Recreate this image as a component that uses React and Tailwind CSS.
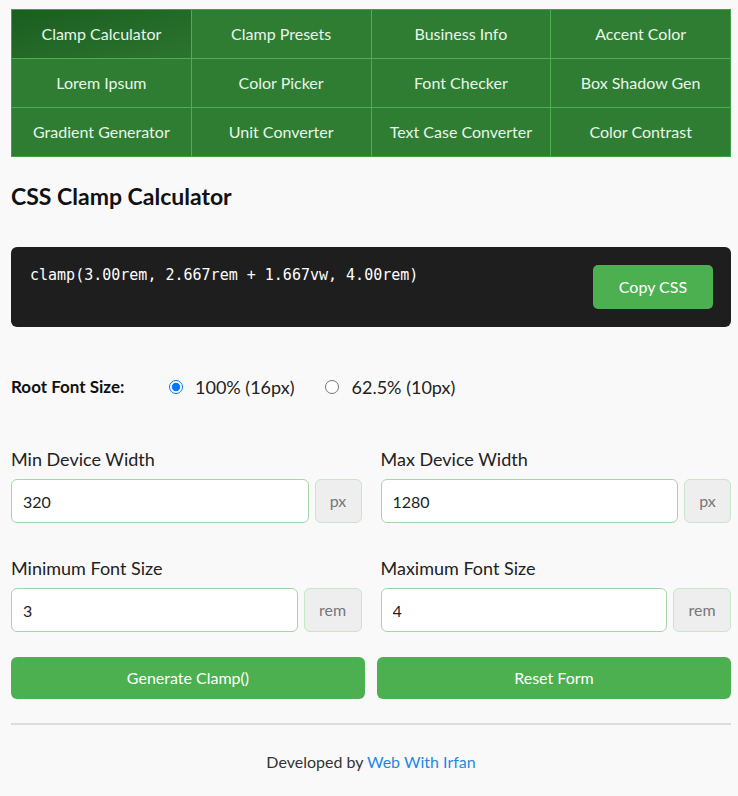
import { useState } from 'react';

const tools = [
  'Clamp Calculator', 'Clamp Presets', 'Business Info', 'Accent Color',
  'Lorem Ipsum', 'Color Picker', 'Font Checker', 'Box Shadow Gen',
  'Gradient Generator', 'Unit Converter', 'Text Case Converter', 'Color Contrast',
];

function Field({ label, value, unit, unitWidth }) {
  return (
    <div>
      <label className="block text-[18px] leading-[24px] text-[#222] mb-[8px]">{label}</label>
      <div className="flex gap-[6px]">
        <input
          type="text"
          defaultValue={value}
          className="flex-1 min-w-0 h-[44px] px-[11px] text-[16px] text-[#222] bg-white border border-[#a5d6a7] rounded-[6px] outline-none"
        />
        <span className={`${unitWidth} h-[44px] flex items-center justify-center text-[16px] text-[#777] bg-[#eeeeee] border border-[#c8e6c9] rounded-[6px]`}>
          {unit}
        </span>
      </div>
    </div>
  );
}

export default function App() {
  const [root, setRoot] = useState('100');

  return (
    <div className="min-h-[796px] bg-[#f9f9f9] pt-[9px] pl-[11px] pr-[7px]" style={{ fontFamily: 'Lato, "Noto Sans", sans-serif' }}>
      {/* ── Tool nav ── */}
      <nav className="grid grid-cols-4 gap-px bg-[#4caf50] border border-[#43a047]">
        {tools.map((t, i) => (
          <button
            key={t}
            className={`h-[48px] flex items-center justify-center text-[16px] text-[#e8f5e9] ${
              i === 0 ? 'bg-linear-to-br from-[#1b5e20] to-[#2b742f]' : 'bg-[#2e7d32]'
            }`}
          >
            {t}
          </button>
        ))}
      </nav>

      <h1 className="mt-[24px] text-[23px] leading-[30px] font-bold text-[#111]">CSS Clamp Calculator</h1>

      {/* ── Output ── */}
      <div className="mt-[36px] h-[80px] bg-[#1e1e1e] rounded-[6px] flex justify-between pl-[19px] pr-[18px] pt-[18px]">
        <code className="text-[15px] leading-[20px] text-white" style={{ fontFamily: '"DejaVu Sans Mono", "Liberation Mono", monospace' }}>
          clamp(3.00rem, 2.667rem + 1.667vw, 4.00rem)
        </code>
        <button className="w-[120px] h-[44px] bg-[#4caf50] text-white text-[16px] rounded-[5px]">Copy CSS</button>
      </div>

      {/* ── Root font size ── */}
      <div className="mt-[48px] flex items-center h-[24px]">
        <span className="text-[17px] font-bold text-[#111] w-[158px]">Root Font Size:</span>
        <label className="flex items-center gap-[12px] text-[18px] text-[#222] mr-[30px]">
          <input type="radio" name="root" checked={root === '100'} onChange={() => setRoot('100')} className="w-[14px] h-[14px] m-0" />
          100% (16px)
        </label>
        <label className="flex items-center gap-[13px] text-[18px] text-[#222]">
          <input type="radio" name="root" checked={root === '62'} onChange={() => setRoot('62')} className="w-[14px] h-[14px] m-0" />
          62.5% (10px)
        </label>
      </div>

      {/* ── Inputs ── */}
      <div className="mt-[48px] grid grid-cols-2 gap-x-[19px] gap-y-[33px]">
        <Field label="Min Device Width" value="320" unit="px" unitWidth="w-[47px]" />
        <Field label="Max Device Width" value="1280" unit="px" unitWidth="w-[47px]" />
        <Field label="Minimum Font Size" value="3" unit="rem" unitWidth="w-[58px]" />
        <Field label="Maximum Font Size" value="4" unit="rem" unitWidth="w-[58px]" />
      </div>

      <div className="mt-[25px] grid grid-cols-2 gap-[12px]">
        <button className="h-[42px] bg-[#4caf50] text-white text-[16px] rounded-[6px]">Generate Clamp()</button>
        <button className="h-[42px] bg-[#4caf50] text-white text-[16px] rounded-[6px]">Reset Form</button>
      </div>

      <hr className="mt-[24px] border-0 h-[2px] bg-[#dddddd]" />

      <footer className="pt-[25px] pb-[20px] text-center text-[16px] text-[#333]">
        Developed by <a href="#" className="text-[#1e88e5]">Web With Irfan</a>
      </footer>
    </div>
  );
}
